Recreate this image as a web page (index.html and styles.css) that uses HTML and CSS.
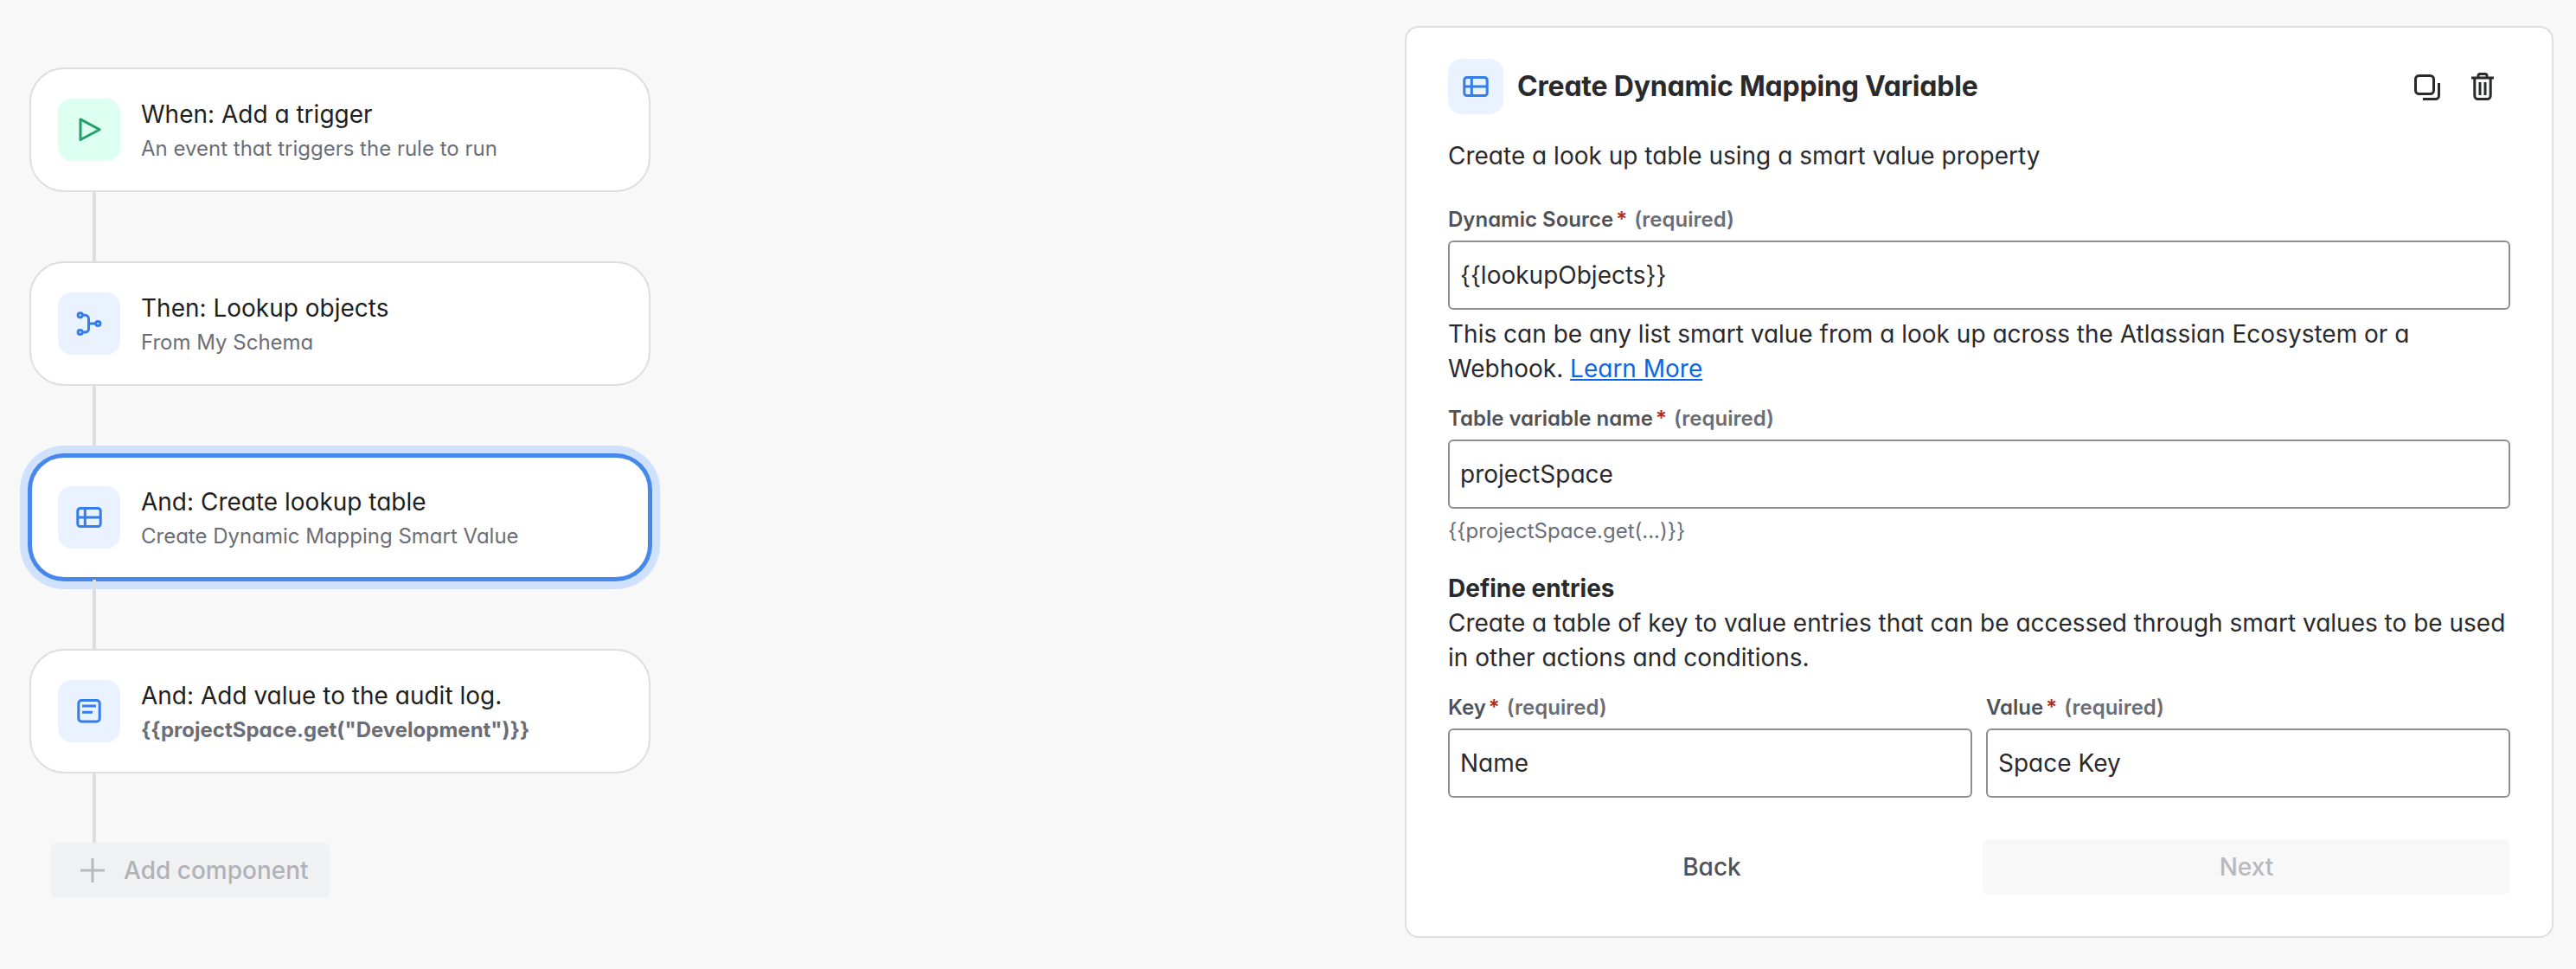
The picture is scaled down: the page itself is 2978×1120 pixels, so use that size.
FILE: index.html
```html
<!DOCTYPE html>
<html lang="en">
<head>
<meta charset="utf-8">
<title>Create Dynamic Mapping Variable</title>
<link rel="stylesheet" href="styles.css">
</head>
<body>
<main class="page">
  <section class="flow">
    <article class="card">
      <div class="tile tile-green">
        <svg class="icon" viewBox="0 0 32 32"><path class="s-green" d="M6 3.9 28.2 15.7 6 27.5Z"/></svg>
      </div>
      <div class="card-text">
        <div class="card-title">When: Add a trigger</div>
        <div class="card-sub">An event that triggers the rule to run</div>
      </div>
    </article>
    <div class="line"></div>
    <article class="card">
      <div class="tile">
        <svg class="icon" viewBox="0 0 32 32"><g class="s-blue"><circle cx="5.7" cy="6.3" r="2.6"/><circle cx="5.7" cy="26" r="2.6"/><circle cx="26.3" cy="16" r="2.6"/><path d="M8.3 6.3H11.5A4 4 0 0 1 15.5 10.3V22A4 4 0 0 1 11.5 26H8.3M15.5 16H23.7"/></g></svg>
      </div>
      <div class="card-text">
        <div class="card-title">Then: Lookup objects</div>
        <div class="card-sub">From My Schema</div>
      </div>
    </article>
    <div class="line"></div>
    <article class="card card-active">
      <div class="tile">
        <svg class="icon" viewBox="0 0 32 32"><g class="s-blue"><rect x="2.8" y="5.5" width="26.4" height="21" rx="3"/><path d="M2.8 16H29.2M11.3 5.5V26.5"/></g></svg>
      </div>
      <div class="card-text">
        <div class="card-title">And: Create lookup table</div>
        <div class="card-sub">Create Dynamic Mapping Smart Value</div>
      </div>
    </article>
    <div class="line"></div>
    <article class="card">
      <div class="tile">
        <svg class="icon" viewBox="0 0 32 32"><g class="s-blue"><rect x="3.8" y="3.5" width="24.4" height="24.4" rx="3.5"/><path d="M8 10H24M8 17.3H20"/></g></svg>
      </div>
      <div class="card-text">
        <div class="card-title">And: Add value to the audit log.</div>
        <div class="card-sub card-sub-strong">{{projectSpace.get("Development")}}</div>
      </div>
    </article>
    <div class="line"></div>
    <div class="add">
      <svg class="add-icon" viewBox="0 0 28 28"><path class="s-muted" d="M14 0V28M0 14H28"/></svg>
      <span>Add component</span>
    </div>
  </section>

  <section class="panel">
    <header class="panel-head">
      <div class="tile tile-small">
        <svg class="icon" viewBox="0 0 32 32"><g class="s-blue"><rect x="2.8" y="5.5" width="26.4" height="21" rx="3"/><path d="M2.8 16H29.2M11.3 5.5V26.5"/></g></svg>
      </div>
      <h1 class="panel-title">Create Dynamic Mapping Variable</h1>
      <div class="actions">
        <div class="action">
          <svg class="icon" viewBox="0 0 32 32"><g class="s-dark"><rect x="2.5" y="3.5" width="21" height="21" rx="4"/><path d="M29.5 12V26.5A4 4 0 0 1 25.5 30.5H11"/></g></svg>
        </div>
        <div class="action">
          <svg class="icon" viewBox="0 0 32 32"><g class="s-dark"><path d="M3 6H29M11 6V3.5A2 2 0 0 1 13 1.5H19A2 2 0 0 1 21 3.5V6M6.8 6V26.5A4 4 0 0 0 10.8 30.5H21.2A4 4 0 0 0 25.2 26.5V6M13 11V26M19 11V26"/></g></svg>
        </div>
      </div>
    </header>
    <p class="desc">Create a look up table using a smart value property</p>

    <div class="label label-first">Dynamic Source<span class="star">*</span> <span class="req">(required)</span></div>
    <div class="input">{{lookupObjects}}</div>
    <p class="help">This can be any list smart value from a look up across the Atlassian Ecosystem or a Webhook. <a class="link" href="#">Learn More</a></p>

    <div class="label label-second">Table variable name<span class="star">*</span> <span class="req">(required)</span></div>
    <div class="input">projectSpace</div>
    <div class="hint">{{projectSpace.get(...)}}</div>

    <h2 class="section-title">Define entries</h2>
    <p class="section-text">Create a table of key to value entries that can be accessed through smart values to be used in other actions and conditions.</p>

    <div class="entries">
      <div class="entry">
        <div class="label">Key<span class="star">*</span> <span class="req">(required)</span></div>
        <div class="input">Name</div>
      </div>
      <div class="entry">
        <div class="label">Value<span class="star">*</span> <span class="req">(required)</span></div>
        <div class="input">Space Key</div>
      </div>
    </div>

    <footer class="buttons">
      <div class="btn btn-back">Back</div>
      <div class="btn btn-next">Next</div>
    </footer>
  </section>
</main>
</body>
</html>
```

FILE: styles.css
```css
* { box-sizing: border-box; }
html, body { margin: 0; padding: 0; }
body {
  background: #f8f8f8;
  color: #292a2e;
  font-family: Inter, "Noto Sans", sans-serif;
  font-feature-settings: "cv11" 1;
  font-size: 28px;
  line-height: 40px;
}
.page {
  display: flex;
  justify-content: space-between;
  height: 1120px;
  padding: 30px 26px 0 34px;
}

/* left column */
.flow { width: 718px; padding-top: 48px; }
.card {
  display: flex;
  align-items: center;
  gap: 24px;
  height: 144px;
  padding: 0 31px;
  background: #fff;
  border: 2px solid #dddee1;
  border-radius: 40px;
}
.card-active {
  border: 3px solid #4688ec;
  padding: 0 30px;
  box-shadow: 0 0 0 2px #4688ec, 0 0 0 11px #cfe1fd;
}
.line { width: 4px; height: 80px; margin-left: 73px; background: #dddee1; }
.tile {
  flex: none;
  display: flex;
  align-items: center;
  justify-content: center;
  width: 72px;
  height: 72px;
  border-radius: 16px;
  background: #e9f2fe;
}
.tile-green { background: #dcfff1; }
.tile-small { width: 64px; height: 64px; }
.icon { width: 32px; height: 32px; display: block; }
.s-green, .s-blue, .s-dark, .s-muted { fill: none; stroke-width: 3; stroke-linejoin: round; }
.s-green { stroke: #22a06b; }
.s-blue { stroke: #357de8; }
.s-dark { stroke: #292a2e; }
.s-muted { stroke: #b7b9be; }
.card-text { min-width: 0; padding-top: 3px; }
.card-title { font-size: 28px; line-height: 40px; color: #1e1f21; }
.card-sub { font-size: 24px; line-height: 40px; color: #6b6e76; }
.card-sub-strong { font-weight: 700; }
.add {
  display: flex;
  align-items: center;
  gap: 22px;
  width: 322px;
  height: 64px;
  margin-left: 25px;
  padding-left: 34px;
  background: #f0f1f2;
  border-radius: 6px;
  color: #b0b2b8;
  font-weight: 500;
}
.add-icon { width: 28px; height: 28px; flex: none; }

/* right panel */
.panel {
  width: 1328px;
  height: 1054px;
  padding: 36px 48px;
  background: #fff;
  border: 2px solid #dddee1;
  border-radius: 16px;
}
.panel-head { display: flex; align-items: center; gap: 16px; height: 64px; }
.panel-title { margin: 0; flex: 1; font-size: 32px; line-height: 40px; font-weight: 650; letter-spacing: -0.2px; color: #292a2e; }
.actions { display: flex; }
.action { width: 64px; height: 64px; display: flex; align-items: center; justify-content: center; }
.desc { margin: 28px 0 0; }
.label { font-size: 24px; line-height: 32px; margin-bottom: 8px; font-weight: 600; color: #505258; }
.label-first { margin-top: 38px; }
.label-second { margin-top: 22px; }
.star { color: #ae2e24; margin-left: 3px; }
.req { color: #6b6e76; margin-left: 2px; }
.input {
  height: 80px;
  padding: 0 12px;
  display: flex;
  align-items: center;
  background: #fff;
  border: 2px solid #8c8f97;
  border-radius: 6px;
  color: #292a2e;
}
.help { margin: 8px 0 0; }
.link { color: #0c66e4; text-decoration: underline; }
.hint { margin-top: 10px; font-size: 24px; line-height: 32px; color: #6b6e76; }
.section-title { margin: 30px 0 0; font-size: 28px; line-height: 40px; font-weight: 650; color: #292a2e; }
.section-text { margin: 0; }
.entries { display: flex; gap: 16px; margin-top: 22px; }
.entry { flex: 1; min-width: 0; }
.buttons { display: flex; gap: 8px; margin-top: 48px; }
.btn {
  flex: 1;
  height: 64px;
  display: flex;
  align-items: center;
  justify-content: center;
  border-radius: 6px;
  font-weight: 500;
}
.btn-back { color: #505258; }
.btn-next { background: #f8f8f8; color: #b7b9be; }
```
